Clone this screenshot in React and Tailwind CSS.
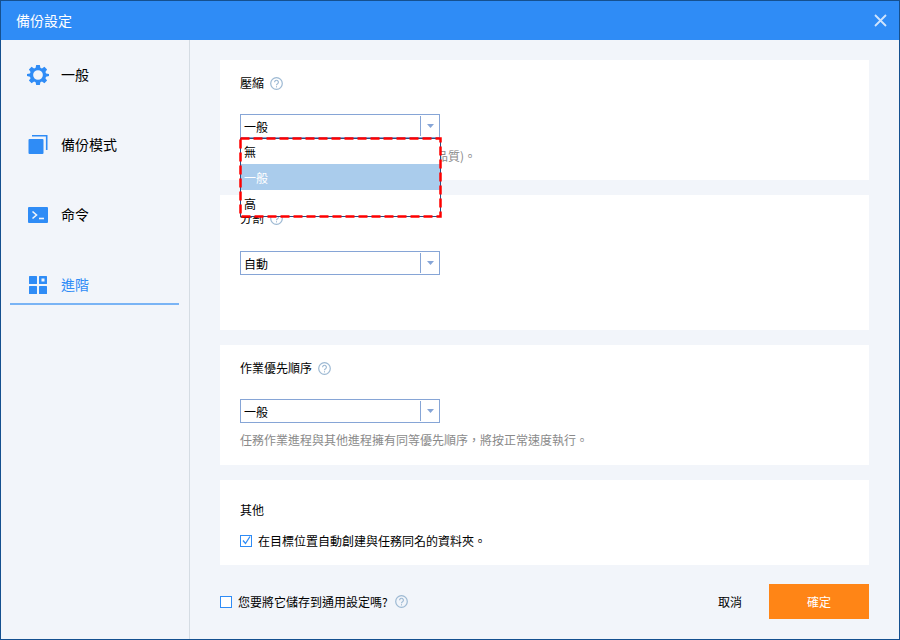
const FONT = "font-['Noto_Sans_CJK_TC','Liberation_Sans',sans-serif]"

function GearIcon() {
  return (
    <svg width="22" height="22" viewBox="0 0 24 24" className="text-[#2f8cf6]">
      <path
        fill="currentColor"
        fillRule="evenodd"
        d="M10 1h4l.6 3.2 1.700.7L19 3.100 21.900 6l-1.800 2.700.7 1.700L24 11v2l-3.200.9-.7 1.700 1.800 2.400-2.900 2.900-2.700-1.800-1.700.7L14 23h-4l-.6-3.200-1.700-.7L5 20.900 2.100 18l1.800-2.400-.7-1.700L0 13v-2l3.200-.6.7-1.700L2.100 6 5 3.100l2.700 1.800 1.700-.7zM12 6.700a5.300 5.300 0 1 0 0 10.600 5.300 5.300 0 0 0 0-10.600z"
      />
    </svg>
  )
}

function CopyIcon() {
  return (
    <svg width="20" height="20" viewBox="0 0 20 20" className="text-[#2f8cf6]">
      <rect x="0.500" y="4" width="15" height="15" rx="1" fill="currentColor" />
      <path d="M4 0.800H18.700V15" fill="none" stroke="currentColor" strokeWidth="1.600" />
    </svg>
  )
}

function TerminalIcon() {
  return (
    <svg width="20" height="16" viewBox="0 0 20 16" className="text-[#2f8cf6]">
      <rect width="20" height="16" rx="1" fill="currentColor" />
      <path d="M4.500 4.500 8.500 8l-4 3.500" fill="none" stroke="#f2f5fa" strokeWidth="1.600" />
      <path d="M11 11.500h5" fill="none" stroke="#f2f5fa" strokeWidth="1.600" />
    </svg>
  )
}

function GridIcon() {
  return (
    <svg width="18" height="18" viewBox="0 0 18 18" className="text-[#2f8cf6]">
      <rect width="8" height="8" rx="0.500" fill="currentColor" />
      <rect x="10" width="8" height="8" rx="0.500" fill="currentColor" />
      <rect x="12.500" y="2.500" width="3" height="3" fill="#f2f5fa" />
      <rect y="10" width="8" height="8" rx="0.500" fill="currentColor" />
      <rect x="10" y="10" width="8" height="8" rx="0.500" fill="currentColor" />
    </svg>
  )
}

function HelpIcon() {
  return (
    <svg width="13" height="13" viewBox="0 0 13 13" className="text-[#9db9d3]">
      <circle cx="6.500" cy="6.500" r="5.800" fill="none" stroke="currentColor" strokeWidth="1.200" />
      <path d="M4.600 5.200a1.900 1.900 0 1 1 2.900 1.600c-.7.400-1 .8-1 1.500" fill="none" stroke="currentColor" strokeWidth="1.200" />
      <rect x="6" y="9.200" width="1" height="1.200" fill="currentColor" />
    </svg>
  )
}

function Select({ value }) {
  return (
    <div className="flex items-center w-[200px] h-6 border border-[#86a5d6] bg-white pl-[3px]">
      <span className="flex-1 pt-[2px] text-xs text-black">{value}</span>
      <span className="w-px h-[20px] bg-[#86a5d6]" />
      <span className="flex justify-center w-[18px]">
        <svg width="7" height="4" viewBox="0 0 7 4" className="text-[#86a5d6]">
          <path d="M0 0h7L3.500 4z" fill="currentColor" />
        </svg>
      </span>
    </div>
  )
}

function Label({ children }) {
  return (
    <div className="flex items-center gap-[6px] h-[16px] text-xs text-black">
      {children}
      <HelpIcon />
    </div>
  )
}

const NAV_ITEMS = [
  { label: '一般', icon: <GearIcon /> },
  { label: '備份模式', icon: <CopyIcon /> },
  { label: '命令', icon: <TerminalIcon /> },
  { label: '進階', icon: <GridIcon />, active: true },
]

export default function App() {
  return (
    <div className={`${FONT} flex flex-col w-[900px] h-[640px] border border-[#15508f] bg-[#f2f5fa] overflow-hidden`}>
      {/* Title bar */}
      <div className="flex items-center justify-between shrink-0 h-[39px] bg-[#2f8cf6] pl-[15px] pr-[12px]">
        <span className="pb-[2px] text-sm text-white">備份設定</span>
        <svg width="13" height="13" viewBox="0 0 13 13" className="text-[#cfe4fd]">
          <path d="M1 1l11 11M12 1 1 12" fill="none" stroke="currentColor" strokeWidth="1.800" />
        </svg>
      </div>

      <div className="flex flex-1 min-h-0">
        {/* Sidebar */}
        <div className="flex flex-col gap-[33px] shrink-0 w-[189px] border-r border-[#d5dce3] pl-[9px] pr-[10px] pt-[18px]">
          {NAV_ITEMS.map(item => (
            <div
              key={item.label}
              className={`flex items-center h-[37px] border-b-2 pb-[2px] ${item.active ? 'border-[#7ab4f5] text-[#2f8cf6]' : 'border-transparent text-black'}`}
            >
              <span className="flex justify-center w-[40px] ml-[8px] mr-[3px]">{item.icon}</span>
              <span className="pb-[2px] text-sm">{item.label}</span>
            </div>
          ))}
        </div>

        {/* Main */}
        <div className="flex flex-col flex-1 min-w-0 pl-[30px] pr-[30px] pt-[20px]">
          <div className="relative flex flex-col gap-[15px]">
            <div className="h-[120px] bg-white px-5 pt-[15px]">
              <Label>壓縮</Label>
              <div className="mt-[23px]"><Select value="一般" /></div>
              <p className="mt-[10px] text-xs text-[#8a8a8a]">{'一般壓縮比率\uFF0C可減少映像檔(並維持品質)。'}</p>
            </div>

            <div className="h-[135px] bg-white px-5 pt-[15px]">
              <Label>分割</Label>
              <div className="mt-[25px]"><Select value="自動" /></div>
            </div>

            <div className="h-[120px] bg-white px-5 pt-[15px]">
              <Label>作業優先順序</Label>
              <div className="mt-[23px]"><Select value="一般" /></div>
              <p className="mt-[9px] text-xs text-[#8a8a8a]">{'任務作業進程與其他進程擁有同等優先順序\uFF0C將按正常速度執行。'}</p>
            </div>

            <div className="h-[85px] bg-white px-5 pt-[22px]">
              <div className="h-[16px] text-xs text-black">其他</div>
              <div className="flex items-center gap-[6px] mt-[15px] text-xs text-black">
                <svg width="12" height="12" viewBox="0 0 12 12" className="text-[#2f8cf6]">
                  <rect x="0.500" y="0.500" width="11" height="11" fill="none" stroke="currentColor" />
                  <path d="M3 5.500l2.500 3L10 1.500" fill="none" stroke="currentColor" strokeWidth="1.300" />
                </svg>
                在目標位置自動創建與任務同名的資料夾。
              </div>
            </div>

            {/* Open dropdown with the red annotation frame */}
            <div className="absolute left-[20px] top-[78px] w-[201px] h-[79px] border border-[#2a4a7f] bg-white text-xs">
              <div className="flex items-center h-[25px] pl-[3px] text-black">無</div>
              <div className="flex items-center h-[26px] pl-[3px] pt-px bg-[#aaccec] text-white">一般</div>
              <div className="flex items-center h-[26px] pl-[3px] pt-px text-black">高</div>
              <svg width="203" height="81" viewBox="0 0 203 81" className="absolute left-[-2px] top-[-2px]">
                <rect x="1.500" y="1.500" width="200" height="78" fill="none" stroke="#ff0000" strokeWidth="2.500" strokeDasharray="9 4" />
              </svg>
            </div>
          </div>

          {/* Footer */}
          <div className="flex items-center mt-[19px] h-[35px]">
            <div className="flex items-center gap-[6px] text-xs text-black">
              <span className="w-3 h-3 border border-[#2f8cf6] bg-white" />
              您要將它儲存到通用設定嗎?
              <span className="ml-px"><HelpIcon /></span>
            </div>
            <span className="ml-auto mr-[27px] text-xs text-black">取消</span>
            <button className="w-[100px] h-[35px] bg-[#ff8516] text-xs text-white">確定</button>
          </div>
        </div>
      </div>
    </div>
  )
}
